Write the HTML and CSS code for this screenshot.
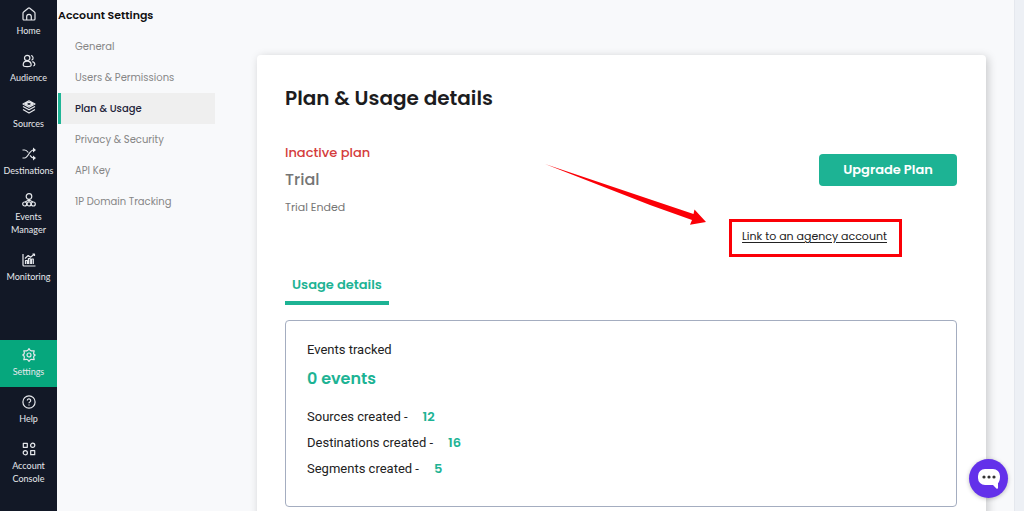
FILE: index.html
```html
<!DOCTYPE html>
<html lang="en">
<head>
<meta charset="utf-8">
<meta name="viewport" content="width=device-width, initial-scale=1">
<title>Plan &amp; Usage details</title>
<link rel="stylesheet" href="styles.css">
</head>
<body>
<div class="app">
  <nav class="rail" aria-label="Main">
    <div class="rail-group rail-main">
      <a class="rail-item" href="#"><svg viewBox="0 0 14 14"><path d="M1 6.200c0-.5.200-.9.600-1.200L6.200 1.200a1.300 1.300 0 0 1 1.600 0L12.400 5c.4.300.6.700.6 1.200V12a1 1 0 0 1-1 1H2a1 1 0 0 1-1-1zM4.700 13V9.600a2.300 2.300 0 0 1 4.600 0V13"/></svg>Home</a>
      <a class="rail-item" href="#"><svg viewBox="0 0 14 14"><circle cx="5.200" cy="4" r="2.700"/><path d="M1.200 11c0-2.400 1.600-3.800 4-3.800s4 1.400 4 3.800c0 1.200-1.200 1.600-4 1.600s-4-.4-4-1.600zM9 1.500a2.500 2.500 0 0 1 .5 4.800M10.300 7.600c1.600.3 2.500 1.500 2.500 3 0 .8-.5 1.200-1.500 1.400"/></svg>Audience</a>
      <a class="rail-item" href="#"><svg viewBox="0 0 14 14"><path d="M7 .8 13 4 7 7.200 1 4zM3.500 3.900 7 2.300l3.500 1.600L7 5.700zM1 6.500l6 3.300 6-3.300M1 9.500l6 3.500 6-3.500"/></svg>Sources</a>
      <a class="rail-item" href="#"><svg viewBox="0 0 14 14"><path d="M.5 3h2.200c1.500 0 2.400 1 3.600 2.500M8 8.400c1.200 1.600 2 2.600 3.500 2.600h1.300M.5 11h2.200C6 11 7.500 3 11.500 3h1.300"/><path class="solid" d="M11 .5 14 3 11 5.500zM11 8.500l3 2.500-3 2.500z"/></svg>Destinations</a>
      <a class="rail-item" href="#"><svg viewBox="0 0 14 14"><circle cx="7" cy="3.500" r="2.800"/><path d="M7 6.300v2.700M7 7 3 9M7 7l4 2"/><circle cx="2.700" cy="11" r="2"/><circle cx="7" cy="11" r="2"/><circle cx="11.300" cy="11" r="2"/></svg>Events Manager</a>
      <a class="rail-item" href="#"><svg viewBox="0 0 14 14"><path d="M1 1v11a1 1 0 0 0 1 1h11.500M3.500 11V7.500h1.800V11M6.400 11V5.500h1.800V11M9.500 11V6h1.800v5M3 5.500l3.200-3 2.300 1.700L12.500 1M10.500 1h2v2"/></svg>Monitoring</a>
    </div>
    <div class="rail-group rail-extra">
      <a class="rail-item active" href="#" aria-current="page"><svg viewBox="0 0 14 14"><path d="M5.800 2.300 7 .7l1.200 1.600 1.200.6 2.800-.1-.6 2.400.4 1.200L13.200 7 12 8l-.4 1.200.6 2.400-2.700-.3-1.300.5L7 13.300l-1.200-1.500-1.300-.5-2.700.3.600-2.400L2 8 .8 7 2 6l.4-1.200-.6-2 2.800.1z"/><circle cx="7" cy="7" r="2"/></svg>Settings</a>
      <a class="rail-item" href="#"><svg viewBox="0 0 14 14"><circle cx="7" cy="7" r="6.100"/><path d="M5.300 5.500a1.700 1.700 0 1 1 2.500 1.500c-.6.3-.8.6-.8 1.200M7 9.600v.9"/></svg>Help</a>
      <a class="rail-item" href="#"><svg viewBox="0 0 14 14"><path d="M1.300 1.300h4v4h-4zM8.700 8.700h4v4h-4z"/><circle cx="10.700" cy="3.300" r="2.100"/><circle cx="3.300" cy="10.700" r="2.100"/></svg>Account Console</a>
    </div>
  </nav>

  <aside class="subnav">
    <h2 class="subnav-title">Account Settings</h2>
    <ul class="subnav-list">
      <li><a class="subnav-link" href="#">General</a></li>
      <li><a class="subnav-link" href="#">Users &amp; Permissions</a></li>
      <li><a class="subnav-link current" href="#">Plan &amp; Usage</a></li>
      <li><a class="subnav-link" href="#">Privacy &amp; Security</a></li>
      <li><a class="subnav-link" href="#">API Key</a></li>
      <li><a class="subnav-link" href="#">1P Domain Tracking</a></li>
    </ul>
  </aside>

  <main class="content">
    <section class="card">
      <h1 class="card-title">Plan &amp; Usage details</h1>
      <div class="plan">
        <div class="plan-info">
          <p class="plan-status">Inactive plan</p>
          <p class="plan-name">Trial</p>
          <p class="plan-note">Trial Ended</p>
        </div>
        <div class="plan-actions">
          <button class="upgrade" type="button">Upgrade Plan</button>
          <div class="callout">
            <a class="agency-link" href="#">Link to an agency account</a>
            <svg class="arrow" viewBox="0 0 162 62" aria-hidden="true"><path d="M0 0 148.500 50l1-4.500L161 58l-16 2.800 2-4.800-42-15z"/></svg>
          </div>
        </div>
      </div>
      <div class="tabs" role="tablist">
        <button class="tab" type="button" role="tab" aria-selected="true">Usage details</button>
      </div>
      <div class="usage" role="tabpanel">
        <p class="usage-label">Events tracked</p>
        <p class="usage-total">0 events</p>
        <dl class="stats">
          <div class="stat"><dt>Sources created -</dt><dd>12</dd></div>
          <div class="stat"><dt>Destinations created -</dt><dd>16</dd></div>
          <div class="stat"><dt>Segments created -</dt><dd>5</dd></div>
        </dl>
      </div>
    </section>
  </main>
  <div class="gutter"></div>
</div>
<button class="chat" type="button" aria-label="Open chat">
  <svg viewBox="0 0 22 20"><path class="bubble" d="M7 0h8a7 7 0 0 1 7 7v1c0 3-1 5.200-2 6.200V19c0 .8-1 1-1.600.4L15 16H7a7 7 0 0 1-7-7V7a7 7 0 0 1 7-7z"/><circle cx="6" cy="8" r="1.600"/><circle cx="11" cy="8" r="1.600"/><circle cx="16" cy="8" r="1.600"/></svg>
</button>
</body>
</html>
```
FILE: styles.css
```css
* { box-sizing: border-box; }

body, h1, h2, p, ul, dl, dd { margin: 0; }

body {
  height: 100vh;
  overflow: hidden;
  background: #f8f9fb;
  color: #1c1c1e;
  font-family: Poppins, Inter, "Open Sans", sans-serif;
}

button { border: 0; font-family: inherit; cursor: pointer; }

.app { display: flex; height: 100%; overflow: hidden; }

/* Icon rail */
.rail {
  display: flex;
  flex: none;
  flex-direction: column;
  gap: 49px;
  width: 57px;
  background: #121826;
}

.rail-group { display: flex; flex-direction: column; }

.rail-main { min-height: 291px; justify-content: space-between; }

.rail-item {
  display: flex;
  flex-direction: column;
  align-items: center;
  gap: 3px;
  padding: 7px 0 8px;
  color: #e6e8ec;
  font: 9px/13px Lato, sans-serif;
  text-align: center;
  text-decoration: none;
}

.rail-extra .rail-item { padding: 8px 8px 9px; }

.rail-item.active { background: #06a77d; }

.rail-item svg {
  width: 14px;
  height: 14px;
  fill: none;
  stroke: currentColor;
  stroke-width: 1.2;
  stroke-linejoin: round;
}

.rail-item .solid { fill: currentColor; stroke: none; }

/* Settings menu */
.subnav { flex: none; width: 158px; padding: 5px 0 0 1px; }

.subnav-title {
  color: #111;
  font-size: 11px;
  font-weight: 600;
  line-height: 20px;
  white-space: nowrap;
}

.subnav-list { padding: 6px 0 0; list-style: none; }

.subnav-link {
  display: block;
  padding-left: 14px;
  border-left: 3px solid transparent;
  color: #868686;
  font-size: 10px;
  line-height: 31px;
  text-decoration: none;
}

.subnav-link.current {
  border-color: #1fb596;
  background: #efefef;
  color: #24243a;
  font-weight: 500;
}

/* Plan card */
.content { flex: 1; min-width: 0; padding: 55px 28px 0 42px; }

.card {
  padding: 28px 29px 40px 28px;
  border-radius: 4px;
  background: #fff;
  box-shadow: 2px 2px 10px rgba(0, 0, 0, 0.2);
}

.card-title { font-size: 20px; font-weight: 600; line-height: 30px; }

.plan { display: flex; justify-content: space-between; padding-top: 30px; }

.plan-status { color: #d43c3c; font-size: 13px; font-weight: 500; line-height: 20px; }

.plan-name {
  padding-top: 4px;
  color: #757575;
  font-size: 16px;
  font-weight: 500;
  line-height: 26px;
}

.plan-note { padding-top: 4px; color: #757575; font-size: 11px; line-height: 20px; }

.plan-actions { display: flex; flex-direction: column; align-items: flex-end; padding-top: 11px; }

.upgrade {
  width: 138px;
  height: 32px;
  border-radius: 4px;
  background: #1db394;
  color: #fff;
  font-size: 13px;
  font-weight: 600;
}

.callout {
  position: relative;
  margin: 33px 55px 0 0;
  padding: 4px 12px 8px 10px;
  border: 3px solid #fb0007;
}

.agency-link {
  display: block;
  color: #222;
  font-size: 11px;
  line-height: 20px;
  text-underline-offset: 2px;
}

.arrow {
  position: absolute;
  right: 192px;
  bottom: 28px;
  width: 162px;
  height: 62px;
  fill: #fb0007;
}

.tabs { display: flex; padding-top: 16px; }

.tab {
  padding: 0 7px 4px;
  border-bottom: 4px solid #1db394;
  background: none;
  color: #1db394;
  font-size: 13px;
  font-weight: 600;
  line-height: 24px;
}

.usage {
  margin-top: 15px;
  padding: 19px 21px 24px;
  border: 1px solid #a4adc0;
  border-radius: 4px;
}

.usage-label, .stats { color: #222; font-family: Roboto, sans-serif; font-size: 13px; }

.usage-label { line-height: 20px; }

.usage-total { padding-top: 6px; color: #1db394; font-size: 16px; font-weight: 600; line-height: 26px; }

.stats { padding-top: 12px; }

.stat { display: flex; gap: 15px; line-height: 26px; }

.stat dd { color: #1db394; font-family: Poppins, Inter, sans-serif; font-size: 13px; font-weight: 600; }

.gutter { flex: none; width: 10px; border-left: 1px solid #e5e8ee; background: #edf0f5; }

/* Chat launcher */
.chat {
  position: fixed;
  right: 16px;
  bottom: 13px;
  display: grid;
  place-items: center;
  width: 39px;
  height: 39px;
  padding: 0;
  border-radius: 50%;
  background: #6331ea;
  box-shadow: 0 1px 4px rgba(0, 0, 0, 0.25);
}

.chat svg { width: 22px; height: 20px; fill: #333; }

.chat .bubble { fill: #fff; }
```
